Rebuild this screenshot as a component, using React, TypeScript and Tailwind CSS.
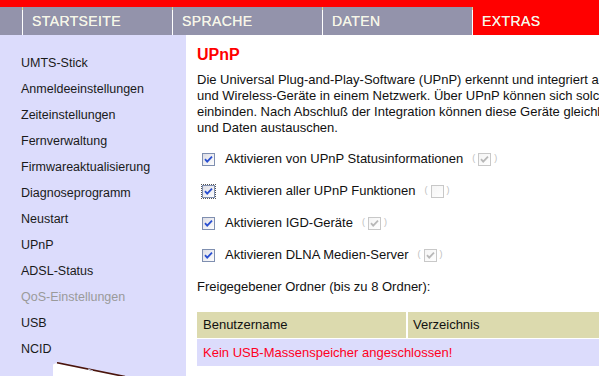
import React from "react";

const tabs = ["STARTSEITE", "SPRACHE", "DATEN", "EXTRAS"];

const menu = [
  "UMTS-Stick",
  "Anmeldeeinstellungen",
  "Zeiteinstellungen",
  "Fernverwaltung",
  "Firmwareaktualisierung",
  "Diagnoseprogramm",
  "Neustart",
  "UPnP",
  "ADSL-Status",
  "QoS-Einstellungen",
  "USB",
  "NCID",
];

function Box({ checked = true, disabled = false }: { checked?: boolean; disabled?: boolean }) {
  const border = disabled ? "#c8c8c8" : "#7f8fb0";
  const tick = disabled ? "#b8b8b8" : "#2a4fd0";
  return (
    <svg width="13" height="13" viewBox="0 0 13 13" className="shrink-0">
      <defs>
        <linearGradient id={disabled ? "gd" : "ge"} x1="0" y1="0" x2="1" y2="1">
          <stop offset="0" stopColor={disabled ? "#f4f4f4" : "#dcdce4"} />
          <stop offset="1" stopColor="#ffffff" />
        </linearGradient>
      </defs>
      <rect x="0.5" y="0.5" width="12" height="12" fill={`url(#${disabled ? "gd" : "ge"})`} stroke={border} />
      {checked && <path d="M3 6.2 L5.2 8.6 L10 3.6" fill="none" stroke={tick} strokeWidth="1.8" />}
    </svg>
  );
}

function Option({ label, sub = true, focus = false }: { label: string; sub?: boolean; focus?: boolean }) {
  return (
    <div className="flex items-center h-[32px] pl-[5px]">
      <span className={focus ? "outline-1 outline-dotted outline-[#555] flex" : "flex"}>
        <Box />
      </span>
      <span className="ml-[10px] text-[13px] text-[#111]">{label}</span>
      <span className="ml-[9px] flex items-center text-[9px] text-[#c0c0c0]">
        (<span className="mx-[3px] flex"><Box disabled checked={sub} /></span>)
      </span>
    </div>
  );
}

export default function App() {
  return (
    <div className="h-screen w-full overflow-hidden flex flex-col font-['Liberation_Sans',Arial,sans-serif] bg-white">
      <div className="h-[7px] bg-[#ff0000]" />
      <nav className="h-[28px] bg-[#9393ab] flex pl-[22px]">
        {tabs.map((t) => (
          <div
            key={t}
            className={`w-[150px] shrink-0 flex items-center ${t === "EXTRAS" ? "bg-[#ff0000] flex-1" : ""}`}
          >
            <div className="w-px h-full bg-[linear-gradient(to_bottom,#d8d890_0,#d8d890_3px,#ffffff_3px)]" />
            <span className="ml-[9px] text-[14px] tracking-[0.4px] text-[#f6f6e8] [text-shadow:0_0_0.4px_#f6f6e8]">{t}</span>
          </div>
        ))}
      </nav>
      <div className="flex flex-1 min-h-0">
        <aside className="w-[186px] shrink-0 bg-[#dcdcfc] pt-[15px] overflow-hidden">
          {menu.map((m) => (
            <div
              key={m}
              className={`h-[26px] leading-[26px] pl-[21px] text-[12.5px] ${m === "QoS-Einstellungen" ? "text-[#9a9a9a]" : "text-[#1a1a1a]"}`}
            >
              {m}
            </div>
          ))}
          <svg width="100" height="20" viewBox="0 0 100 20" className="ml-[50px] block">
            <polygon points="3,2.4 7,0.7 73,14 73,20 3,20" fill="#ffffff" />
            <line x1="7" y1="0.7" x2="75" y2="14.6" stroke="#4a140c" strokeWidth="1.6" />
            <path d="M38 7 l5 2" stroke="#c8d0e8" strokeWidth="1" />
          </svg>
        </aside>
        <main className="flex-1 min-w-0 overflow-hidden pl-[11px] pt-[10px] text-[#111]">
          <h1 className="text-[16px] leading-[20px] font-bold text-[#ff0000]">UPnP</h1>
          <p className="mt-[7px] text-[13px] leading-[16px] whitespace-nowrap">
            Die Universal Plug-and-Play-Software (UPnP) erkennt und integriert alle kabelgebundenen
            <br />
            und Wireless-Geräte in einem Netzwerk. Über UPnP können sich solche Geräte selbst
            <br />
            einbinden. Nach Abschluß der Integration können diese Geräte gleichberechtigt Informationen
            <br />
            und Daten austauschen.
          </p>
          <div className="mt-[7px]">
            <Option label="Aktivieren von UPnP Statusinformationen" />
            <Option label="Aktivieren aller UPnP Funktionen" sub={false} focus />
            <Option label="Aktivieren IGD-Geräte" />
            <Option label="Aktivieren DLNA Medien-Server" />
          </div>
          <div className="mt-[8px] text-[13px] leading-[16px]">Freigegebener Ordner (bis zu 8 Ordner):</div>
          <div className="mt-[17px] w-[560px] text-[13px]">
            <div className="flex h-[26px] bg-[#dcdaae]">
              <div className="w-[211px] pl-[6px] flex items-center border-r-2 border-white">Benutzername</div>
              <div className="flex-1 pl-[5px] flex items-center">Verzeichnis</div>
            </div>
            <div className="h-[27px] mt-px bg-[#dcdcfc] pl-[6px] flex items-center text-[#ff0022]">
              Kein USB-Massenspeicher angeschlossen!
            </div>
          </div>
        </main>
      </div>
    </div>
  );
}
